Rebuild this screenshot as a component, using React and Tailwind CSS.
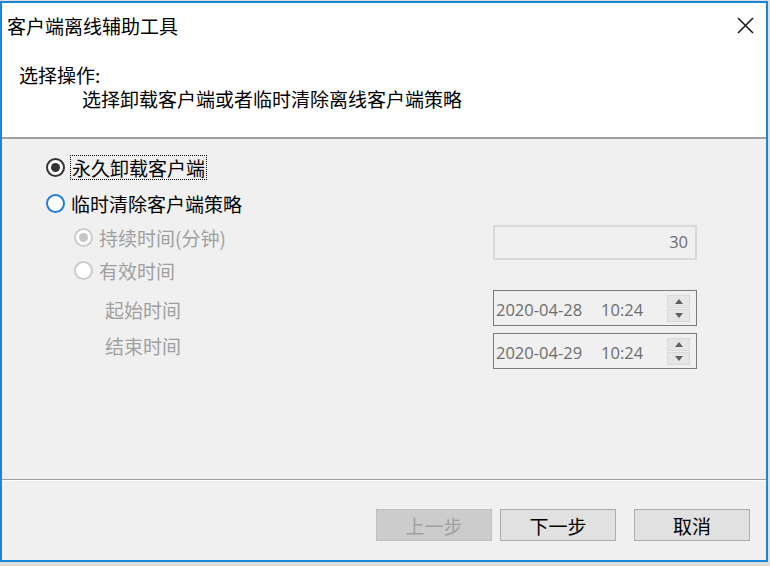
import React from 'react';

const cjk = { fontFamily: '"Noto Sans CJK SC", "Noto Sans", sans-serif' };

const Radio = ({ state }) => {
  // state: checked | focus | disabledChecked | disabled
  if (state === 'checked') {
    return (
      <span className="w-[19px] h-[19px] rounded-full border-2 border-[#333333] bg-white flex items-center justify-center shrink-0">
        <span className="w-[9px] h-[9px] rounded-full bg-[#333333]" />
      </span>
    );
  }
  if (state === 'focus') {
    return <span className="w-[19px] h-[19px] rounded-full border-2 border-[#1e7fd6] bg-white shrink-0" />;
  }
  if (state === 'disabledChecked') {
    return (
      <span className="w-[19px] h-[19px] rounded-full border-2 border-[#cccccc] bg-white flex items-center justify-center shrink-0">
        <span className="w-[9px] h-[9px] rounded-full bg-[#c6c6c6]" />
      </span>
    );
  }
  return <span className="w-[19px] h-[19px] rounded-full border-2 border-[#cccccc] bg-white shrink-0" />;
};

const Spinner = () => (
  <div className="flex flex-col gap-[1px] w-[23px] h-[27px]">
    <div className="flex-1 bg-[#e6e6e6] border border-[#dadada] flex items-center justify-center">
      <svg width="8" height="5" viewBox="0 0 8 5"><path d="M4 0 L8 5 L0 5 Z" fill="#606060" /></svg>
    </div>
    <div className="flex-1 bg-[#e6e6e6] border border-[#dadada] flex items-center justify-center">
      <svg width="8" height="5" viewBox="0 0 8 5"><path d="M0 0 L8 0 L4 5 Z" fill="#606060" /></svg>
    </div>
  </div>
);

const DateField = ({ date, className = '' }) => (
  <div className={`h-[36px] w-[204px] border border-[#7a7a7a] bg-[#f0f0f0] flex items-center pl-[2px] pr-[6px] ${className}`}>
    <div className="flex-1 flex items-center pt-[4px] text-[16.5px] text-[#6d6d6d] leading-none" style={{ fontFamily: '"Open Sans", "Noto Sans", sans-serif' }}>
      <span>{date}</span>
      <span className="ml-[19px]">10:24</span>
    </div>
    <Spinner />
  </div>
);

const Button = ({ children, disabled, className = '' }) => (
  <button
    className={`w-[116px] h-[32px] border text-[19px] leading-none flex items-center justify-center ${
      disabled ? 'bg-[#cccccc] border-[#bfbfbf] text-[#a0a0a0]' : 'bg-[#e1e1e1] border-[#adadad] text-black'
    } ${className}`}
    style={cjk}
  >
    {children}
  </button>
);

export default function App() {
  return (
    <div className="w-[770px] h-[566px] bg-[#dedede] pt-[1px]">
      <div className="w-[768px] h-[561px] border-2 border-[#1b86d8] bg-white flex flex-col" style={cjk}>
        {/* header */}
        <div className="h-[134px] bg-white flex flex-col">
          <div className="h-[44px] flex items-center justify-between pl-[5px] pr-[12px]">
            <span className="text-[19px] leading-none text-black">客户端离线辅助工具</span>
            <svg width="17" height="17" viewBox="0 0 17 17">
              <path d="M1 1 L16 16 M16 1 L1 16" stroke="#1a1a1a" strokeWidth="1.6" />
            </svg>
          </div>
          <div className="pl-[17px] mt-[16px] text-[19px] leading-[24px] text-black">
            <div>选择操作:</div>
            <div className="pl-[63px]">选择卸载客户端或者临时清除离线客户端策略</div>
          </div>
        </div>
        <div className="h-[2px] bg-[#a0a0a0]" />

        {/* body */}
        <div className="flex-1 bg-[#f0f0f0] flex">
          <div className="flex-1 flex flex-col pl-[44px] text-[19px] leading-none">
            <div className="h-[26px] mt-[15px] flex items-center gap-[5px]">
              <Radio state="checked" />
              <span className="border border-dotted border-black px-[1px] py-[2px] text-black">永久卸载客户端</span>
            </div>
            <div className="h-[26px] mt-[10px] flex items-center gap-[6px]">
              <Radio state="focus" />
              <span className="text-black">临时清除客户端策略</span>
            </div>
            <div className="h-[26px] mt-[8px] flex items-center gap-[6px] pl-[28px]">
              <Radio state="disabledChecked" />
              <span className="text-[#a0a0a0]">持续时间(分钟)</span>
            </div>
            <div className="h-[26px] mt-[7px] flex items-center gap-[6px] pl-[28px]">
              <Radio state="disabled" />
              <span className="text-[#a0a0a0]">有效时间</span>
            </div>
            <div className="h-[26px] mt-[13px] flex items-center pl-[59px] text-[#a0a0a0]">起始时间</div>
            <div className="h-[26px] mt-[10px] flex items-center pl-[59px] text-[#a0a0a0]">结束时间</div>
          </div>
          <div className="w-[204px] mr-[69px] flex flex-col pt-[86px]">
            <div className="h-[35px] border-2 border-[#d9d9d9] bg-[#f0f0f0] flex items-center justify-end pr-[7px] text-[16.5px] text-[#6d6d6d]" style={{ fontFamily: '"Open Sans", "Noto Sans", sans-serif' }}>
              30
            </div>
            <DateField date="2020-04-28" className="mt-[30px]" />
            <DateField date="2020-04-29" className="mt-[7px]" />
          </div>
        </div>

        <div className="h-[1px] bg-[#a0a0a0]" />
        <div className="h-[1px] bg-white" />

        {/* footer */}
        <div className="h-[79px] bg-[#f0f0f0] flex justify-end pt-[28px] pr-[16px]">
          <Button disabled>上一步</Button>
          <Button className="ml-[8px]">下一步</Button>
          <Button className="ml-[18px]">取消</Button>
        </div>
      </div>
    </div>
  );
}
